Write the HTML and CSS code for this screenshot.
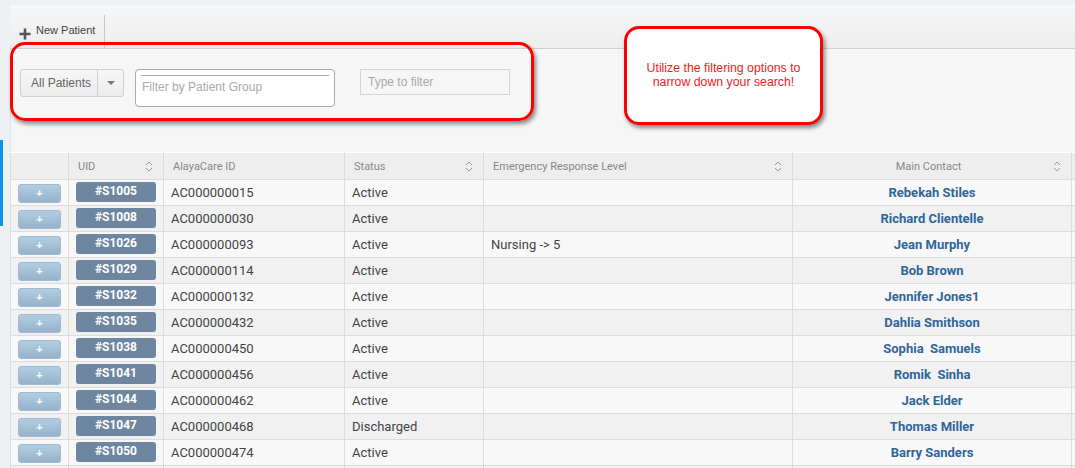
FILE: index.html
```html
<!DOCTYPE html>
<html>
<head>
    <title>Patients</title>
    <meta name="viewport" content="width=device-width, initial-scale=1.0">
    <link rel="stylesheet" href="styles.css">
</head>
<body>
    <div class="page">
        <div class="side">
            <div class="side-marker"></div>
        </div>
        <div class="panel">
            <div class="toolbar">
                <button class="new-patient">
                    <svg width="12" height="12" viewBox="0 0 12 12"><path d="M6 0.5v11M0.5 6h11" stroke="#555" stroke-width="2.6"/></svg>
                    New Patient
                </button>
            </div>
            <div class="filters">
                <div class="split-select">
                    <span class="split-label">All Patients</span>
                    <span class="split-caret"></span>
                </div>
                <div class="group-filter">
                    <div class="group-line"></div>
                    <input type="text" placeholder="Filter by Patient Group">
                </div>
                <input class="quick-filter" type="text" placeholder="Type to filter">
            </div>
            <table class="patients">
                <colgroup>
                    <col style="width: 58px">
                    <col style="width: 95px">
                    <col style="width: 181px">
                    <col style="width: 139px">
                    <col style="width: 309px">
                    <col style="width: 279px">
                    <col style="width: 200px">
                </colgroup>
                <thead>
                    <tr>
                        <th></th>
                        <th class="sortable">UID</th>
                        <th>AlayaCare ID</th>
                        <th class="sortable">Status</th>
                        <th class="sortable">Emergency Response Level</th>
                        <th class="sortable centered">Main Contact</th>
                        <th class="sortable"></th>
                    </tr>
                </thead>
                <tbody id="rows"></tbody>
            </table>
        </div>

        <div class="annotation annotation-filters"></div>
        <div class="annotation callout">
            Utilize the filtering options to<br>narrow down your search!
        </div>
    </div>

    <script>
        const patients = [
            ['#S1005', 'AC000000015', 'Active', '', 'Rebekah Stiles'],
            ['#S1008', 'AC000000030', 'Active', '', 'Richard Clientelle'],
            ['#S1026', 'AC000000093', 'Active', 'Nursing -> 5', 'Jean Murphy'],
            ['#S1029', 'AC000000114', 'Active', '', 'Bob Brown'],
            ['#S1032', 'AC000000132', 'Active', '', 'Jennifer Jones1'],
            ['#S1035', 'AC000000432', 'Active', '', 'Dahlia Smithson'],
            ['#S1038', 'AC000000450', 'Active', '', 'Sophia  Samuels'],
            ['#S1041', 'AC000000456', 'Active', '', 'Romik  Sinha'],
            ['#S1044', 'AC000000462', 'Active', '', 'Jack Elder'],
            ['#S1047', 'AC000000468', 'Discharged', '', 'Thomas Miller'],
            ['#S1050', 'AC000000474', 'Active', '', 'Barry Sanders'],
            // next row only peeks in at the bottom edge
            ['', '', '', '', '']
        ];

        const tbody = document.getElementById('rows');

        patients.forEach(p => {
            const tr = document.createElement('tr');
            tr.innerHTML = `
                <td><button class="expand">${p[0] ? '+' : ''}</button></td>
                <td><span class="uid">${p[0]}</span></td>
                <td>${p[1]}</td>
                <td>${p[2]}</td>
                <td>${p[3].replace('>', '&gt;')}</td>
                <td class="contact">${p[4].replace(/  /g, ' &nbsp;')}</td>
                <td></td>
            `;
            tbody.appendChild(tr);
        });
    </script>
</body>
</html>
```

FILE: styles.css
```css
:root {
    --page-bg: #edf1f4;
    --panel-bg: #f6f6f6;
    --border: #dcdcdc;
    --text: #444;
    --muted: #888;
    --placeholder: #aaa;
    --badge: #6e86a0;
    --contact: #30659a;
    --alert: #ff0000;
}

html, body {
    margin: 0;
    height: 468px;
    overflow: hidden;
}

body {
    background: var(--page-bg);
    color: var(--text);
    font-family: 'Liberation Sans', Arial, sans-serif;
}

.page {
    position: relative;
    display: flex;
    padding-top: 5px;
    height: 463px;
}

.side {
    width: 10px;
    flex: none;
    position: relative;
}

.side-marker {
    position: absolute;
    left: 0;
    top: 135px;
    width: 3px;
    height: 86px;
    background: #0a95e6;
}

.panel {
    flex: 1;
    min-width: 0;
    background: var(--panel-bg);
    box-shadow: inset 1px 0 0 #e3e6e9;
    overflow: hidden;
}

/* toolbar */

.toolbar {
    height: 43px;
    background: linear-gradient(#f7f7f7, #eeeeee);
    border-bottom: 1px solid #cfcfcf;
    display: flex;
    align-items: flex-end;
}

.new-patient {
    height: 33px;
    display: flex;
    align-items: center;
    gap: 5px;
    padding: 0 9px 3px 9px;
    border: none;
    border-right: 1px solid #c8c8c8;
    background: transparent;
    color: #444;
    font-family: 'Liberation Sans', Arial, sans-serif;
    font-size: 11px;
    cursor: pointer;
}

.new-patient svg {
    margin-top: 7px;
}

/* filters */

.filters {
    height: 103px;
    display: flex;
    align-items: flex-start;
    padding: 20px 0 0 10px;
    box-sizing: border-box;
}

.split-select {
    display: flex;
    height: 28px;
    box-sizing: border-box;
    border: 1px solid #cfcfcf;
    border-radius: 3px;
    background: linear-gradient(#f6f6f6, #ececec);
    font-size: 12px;
    color: #666;
}

.split-label {
    width: 77px;
    display: flex;
    align-items: center;
    padding-left: 10px;
    box-sizing: border-box;
    border-right: 1px solid #cfcfcf;
}

.split-caret {
    width: 25px;
    display: flex;
    align-items: center;
    justify-content: center;
}

.split-caret::after {
    content: '';
    border-left: 4px solid transparent;
    border-right: 4px solid transparent;
    border-top: 4px solid #777;
}

.group-filter {
    margin-left: 11px;
    width: 200px;
    height: 38px;
    box-sizing: border-box;
    border: 1px solid #aaa;
    border-radius: 4px;
    background: #fff;
    padding: 5px 5px 0 5px;
}

.group-line {
    height: 1px;
    background: #aaa;
}

.group-filter input {
    border: none;
    outline: none;
    background: transparent;
    width: 100%;
    padding: 4px 0 0 1px;
    font-family: 'Liberation Sans', Arial, sans-serif;
    font-size: 12px;
}

.quick-filter {
    margin-left: 25px;
    width: 150px;
    height: 26px;
    box-sizing: border-box;
    border: 1px solid #d5d5d5;
    background: var(--panel-bg);
    padding: 0 7px;
    font-family: 'Liberation Sans', Arial, sans-serif;
    font-size: 12px;
    outline: none;
}

input::placeholder {
    color: var(--placeholder);
}

/* table */

.patients {
    border-collapse: collapse;
    table-layout: fixed;
    width: 1261px;
    font-family: Roboto, 'Liberation Sans', sans-serif;
}

.patients th {
    height: 27px;
    box-sizing: border-box;
    background: #eeeeee;
    border: 1px solid var(--border);
    border-top-color: #fff;
    color: var(--muted);
    font-size: 11px;
    font-weight: 400;
    text-align: left;
    padding: 0 10px 0 9px;
    position: relative;
}

.patients th.centered {
    text-align: center;
    padding-right: 16px;
}

.patients th.sortable::after {
    content: '';
    position: absolute;
    right: 10px;
    top: 7px;
    width: 8px;
    height: 13px;
    background:
        url("data:image/svg+xml,%3Csvg xmlns='http://www.w3.org/2000/svg' width='8' height='13'%3E%3Cpath d='M1 5l3-3 3 3M1 8l3 3 3-3' fill='none' stroke='%23999' stroke-width='1'/%3E%3C/svg%3E");
}

.patients td {
    height: 26px;
    box-sizing: border-box;
    border: 1px solid var(--border);
    padding: 0 7px;
    font-size: 13px;
    color: var(--text);
    white-space: nowrap;
}

.patients tbody tr:nth-child(odd) td {
    background: #f8f8f8;
}

.patients tbody tr:nth-child(even) td {
    background: #f1f1f1;
}

.expand {
    display: block;
    width: 43px;
    height: 19px;
    margin-top: 2px;
    border: 1px solid #9fbad2;
    border-radius: 3px;
    background: linear-gradient(#b0cee1, #97b2cb);
    color: #fff;
    font-size: 11px;
    font-weight: 700;
    line-height: 15px;
    padding: 0;
    cursor: pointer;
}

.uid {
    display: block;
    height: 20px;
    margin-bottom: 2px;
    border-radius: 3px;
    background: var(--badge);
    color: #fff;
    font-size: 12px;
    font-weight: 700;
    line-height: 19px;
    text-align: center;
}

.patients td.contact {
    text-align: center;
    font-weight: 700;
    color: var(--contact);
}

/* annotations laid over the screen */

.annotation {
    position: absolute;
    box-sizing: border-box;
    border: 3px solid var(--alert);
    border-radius: 15px;
    box-shadow: 2px 3px 4px rgba(0, 0, 0, 0.45);
}

.annotation-filters {
    left: 10px;
    top: 42px;
    width: 524px;
    height: 79px;
}

.callout {
    left: 624px;
    top: 26px;
    width: 199px;
    height: 99px;
    background: #fff;
    color: #f02020;
    font-size: 12.3px;
    line-height: 14px;
    text-align: center;
    padding-top: 32px;
}
```
